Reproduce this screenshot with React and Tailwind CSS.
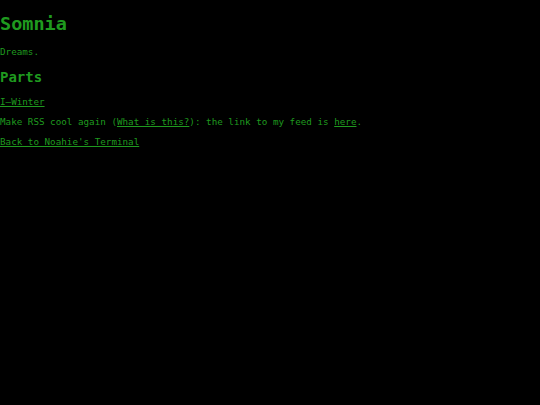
export default function App() {
  return (
    <div className="min-h-[405px] bg-black text-[#1f9a1f] font-['DejaVu_Sans_Mono',monospace] text-[9.25px] leading-[1.164]">
      <h1 className="text-[18.5px] font-bold pt-[12.5px] mb-[12.5px] leading-[1.164]">Somnia</h1>
      <p className="mb-[11.6px]">Dreams.</p>
      <h2 className="text-[14px] font-bold mb-[12px] leading-[1.164]">Parts</h2>
      <p className="mb-[9.4px]">
        <a href="#" className="underline">I—Winter</a>
      </p>
      <p className="mb-[9.4px]">
        Make RSS cool again (<a href="#" className="underline">What is this?</a>): the link to my feed is{' '}
        <a href="#" className="underline">here</a>.
      </p>
      <p>
        <a href="#" className="underline">Back to Noahie's Terminal</a>
      </p>
    </div>
  )
}
